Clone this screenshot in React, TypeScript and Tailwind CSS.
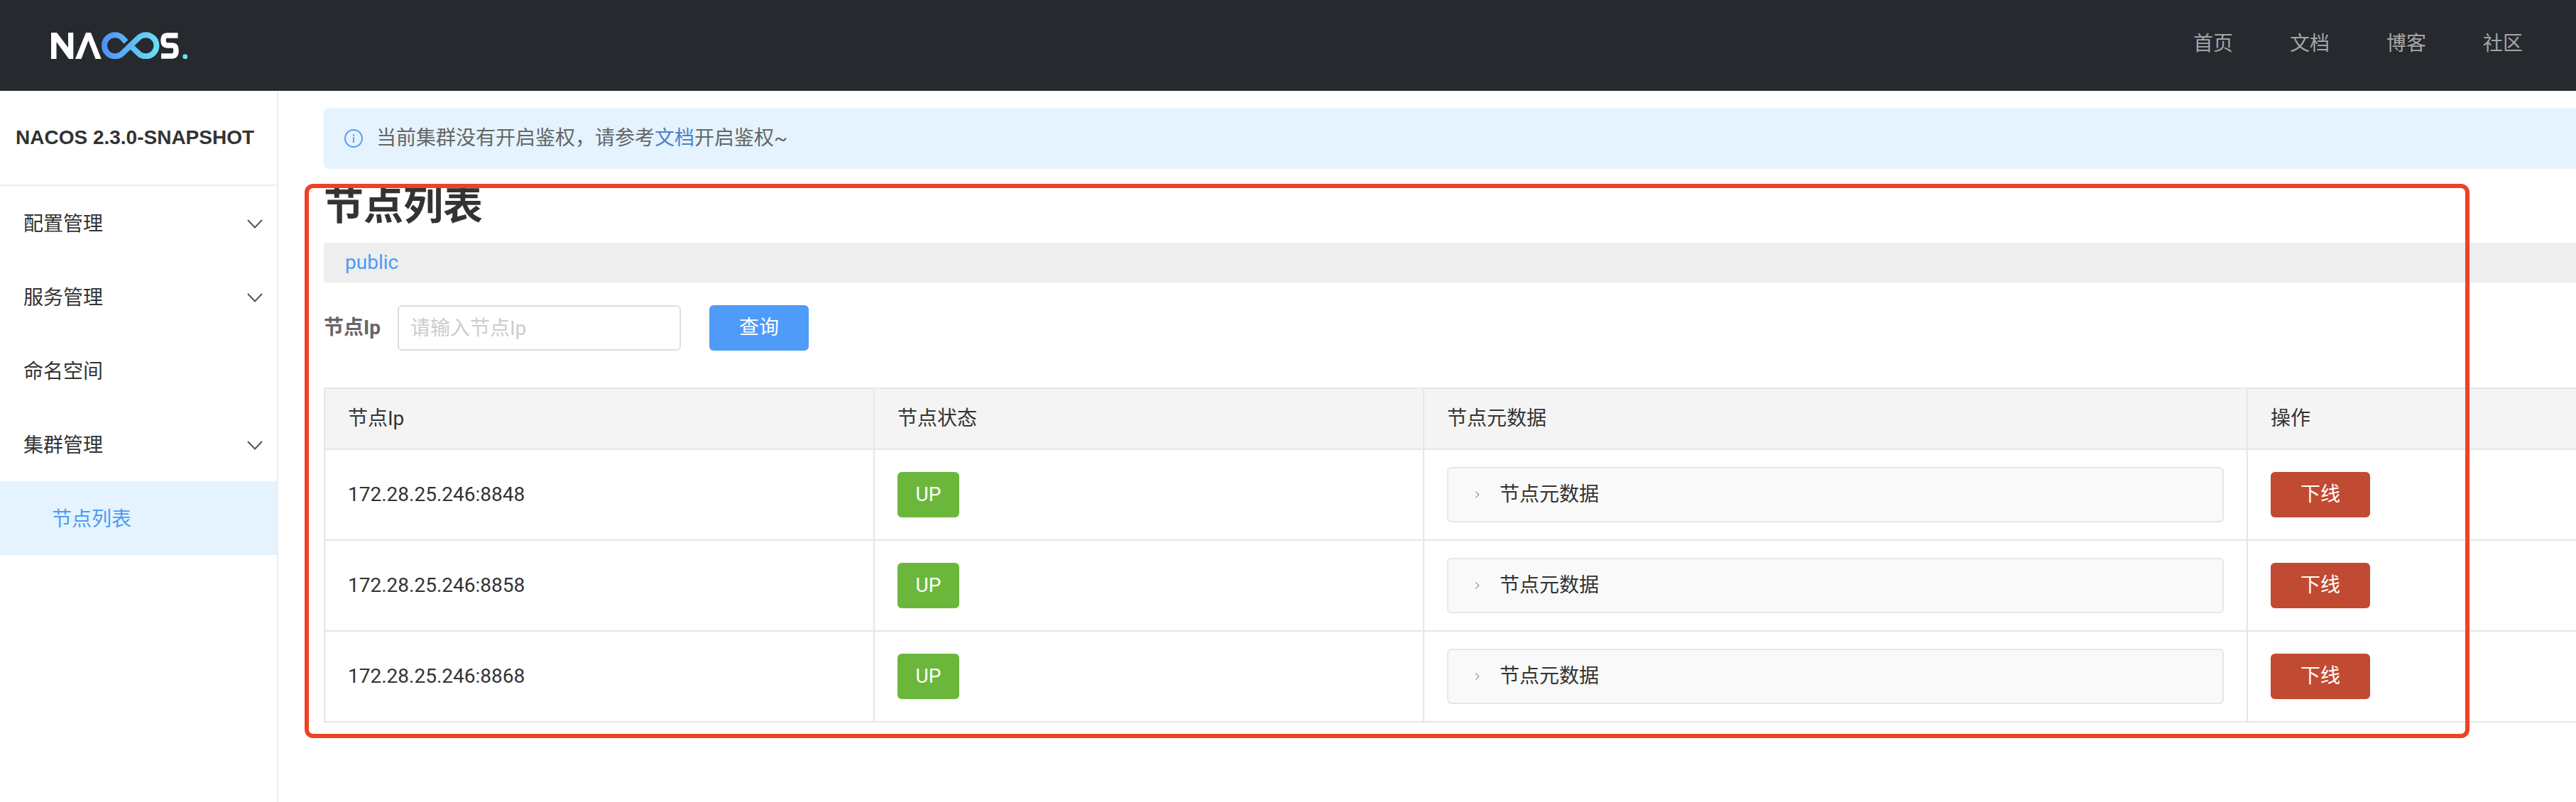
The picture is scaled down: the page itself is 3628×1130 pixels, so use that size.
import React from "react";

const nodes = ["172.28.25.246:8848", "172.28.25.246:8858", "172.28.25.246:8868"];
const navLinks = ["首页", "文档", "博客", "社区"];

const Logo = () => (
  <svg width="192" height="38" viewBox="72 40 192 38" fill="none">
    <defs>
      <linearGradient id="loop" gradientUnits="userSpaceOnUse" x1="143" y1="59" x2="224" y2="59">
        <stop offset="0" stopColor="#4e8ff7" />
        <stop offset="1" stopColor="#6be0f5" />
      </linearGradient>
    </defs>
    <polygon fill="#fff" points="72,41 80,41 96,62 96,41 103.3,41 103.3,78 97,78 79.5,54 79.5,78 72,78" />
    <polygon fill="#fff" points="106,78 121,41 128,41 142.7,78 134.5,78 124.5,52 114.5,78" />
    <path
      d="M177.5 54 L172.6 48.7 A15 15 0 1 0 172.6 69.9 L194.8 48.7 A15 15 0 1 1 194.8 69.9 L183.5 59.3"
      stroke="url(#loop)"
      strokeWidth="8"
    />
    <path
      d="M250.5 45 H235 Q230 45 230 52 Q230 59 236 59 H243 Q248 59 248 66 Q248 74 242 74 H227"
      stroke="#fff"
      strokeWidth="7.5"
    />
    <circle cx="260.7" cy="74.7" r="3.5" fill="#6be0f5" />
  </svg>
);

const Chevron = () => (
  <svg width="22" height="13" viewBox="0 0 22 13" fill="none" stroke="#555" strokeWidth="2">
    <polyline points="1,1 11,11.5 21,1" />
  </svg>
);

const MenuItem = ({ label, arrow }: { label: string; arrow?: boolean }) => (
  <div className="h-[104px] pt-[3px] flex items-center justify-between pl-[33px] pr-[20px] text-[28px] text-[#333]">
    <span>{label}</span>
    {arrow && <Chevron />}
  </div>
);

export default function App() {
  return (
    <div className="relative w-[3628px] h-[1130px] overflow-hidden bg-white font-['Roboto','Noto_Sans_CJK_SC',sans-serif]">
      {/* Top bar */}
      <header className="h-[128px] bg-[#26292e] flex items-center justify-between pl-[72px] pr-[75px]">
        <Logo />
        <nav className="flex gap-[80px] text-[28px] text-[#a6a6a6] -mt-[4px]">
          {navLinks.map((link) => (
            <a key={link}>{link}</a>
          ))}
        </nav>
      </header>

      <div className="flex h-[1002px]">
        {/* Sidebar */}
        <aside className="w-[392px] shrink-0 border-r-2 border-[#eee]">
          <div className="h-[132px] border-b-2 border-[#eee] box-content flex items-center pl-[22px] text-[28px] font-bold text-[#333] font-['Liberation_Sans','Noto_Sans_CJK_SC',sans-serif]">
            NACOS 2.3.0-SNAPSHOT
          </div>
          <MenuItem label="配置管理" arrow />
          <MenuItem label="服务管理" arrow />
          <MenuItem label="命名空间" />
          <MenuItem label="集群管理" arrow />
          <div className="h-[104px] pt-[3px] bg-[#e4f3fd] flex items-center pl-[73px] text-[28px] text-[#4c9bf5]">节点列表</div>
        </aside>

        {/* Main */}
        <main className="flex-1 min-w-0 pl-[64px] pt-[24px]">
          <div className="h-[86px] bg-[#e4f3fd] rounded-l-[8px] flex items-center pl-[29px] text-[28px] text-[#666]">
            <svg width="26" height="26" viewBox="0 0 26 26" fill="none" className="mr-[19px] shrink-0">
              <circle cx="13" cy="13" r="12" stroke="#5a9bf8" strokeWidth="2" />
              <rect x="12" y="7" width="2" height="2.5" fill="#5a9bf8" />
              <rect x="12" y="11" width="2" height="8" fill="#5a9bf8" />
            </svg>
            <span>
              当前集群没有开启鉴权，请参考<a className="text-[#4f7fc4]">文档</a>开启鉴权~
            </span>
          </div>

          <h1 className="h-[104px] flex items-center text-[56px] font-bold text-[#333]">节点列表</h1>

          <div className="h-[56px] bg-[#eee] flex items-center pl-[30px] text-[28px] text-[#4c9bf5]">public</div>

          <div className="mt-[32px] flex items-center">
            <label className="w-[104px] text-[28px] font-bold text-[#666]">节点Ip</label>
            <input
              placeholder="请输入节点Ip"
              className="w-[399px] h-[64px] border-2 border-[#ddd] rounded-[6px] px-[16px] text-[28px] outline-none placeholder:text-[#ccc]"
            />
            <button className="ml-[40px] w-[140px] h-[64px] rounded-[6px] bg-[#4f9bf8] text-white text-[28px]">查询</button>
          </div>

          <table className="mt-[52px] w-full table-fixed border-separate border-spacing-0 text-[28px] text-[#333]">
            <colgroup>
              <col className="w-[774px]" />
              <col className="w-[774px]" />
              <col className="w-[1160px]" />
              <col />
            </colgroup>
            <thead>
              <tr className="h-[88px] bg-[#f4f4f4]">
                {["节点Ip", "节点状态", "节点元数据", "操作"].map((title) => (
                  <th key={title} className="border-l-2 border-t-2 border-b-2 border-[#e6e6e6] pl-[32px] text-left font-normal">
                    {title}
                  </th>
                ))}
              </tr>
            </thead>
            <tbody>
              {nodes.map((ip) => (
                <tr key={ip} className="h-[128px]">
                  <td className="border-l-2 border-b-2 border-[#e6e6e6] pl-[32px]">{ip}</td>
                  <td className="border-l-2 border-b-2 border-[#e6e6e6] pl-[32px]">
                    <span className="w-[87px] h-[64px] rounded-[6px] bg-[#6bb73c] text-white flex items-center justify-center">UP</span>
                  </td>
                  <td className="border-l-2 border-b-2 border-[#e6e6e6] px-[32px]">
                    <div className="h-[78px] bg-[#f9f9f9] border-2 border-[#e6e6e6] rounded-[6px] flex items-center pl-[37px]">
                      <svg width="7" height="10" viewBox="0 0 7 10" fill="none" stroke="#666" strokeWidth="1" className="mr-[28px]">
                        <polyline points="1,0.5 6,5 1,9.5" />
                      </svg>
                      <span>节点元数据</span>
                    </div>
                  </td>
                  <td className="border-l-2 border-b-2 border-[#e6e6e6] pl-[32px]">
                    <button className="w-[140px] h-[64px] rounded-[6px] bg-[#c14a32] text-white">下线</button>
                  </td>
                </tr>
              ))}
            </tbody>
          </table>
        </main>
      </div>

      {/* Annotation frame drawn over the screenshot */}
      <div className="absolute left-[429px] top-[259px] w-[3049px] h-[781px] border-[6px] border-[#ee4125] rounded-[12px] pointer-events-none" />
    </div>
  );
}
